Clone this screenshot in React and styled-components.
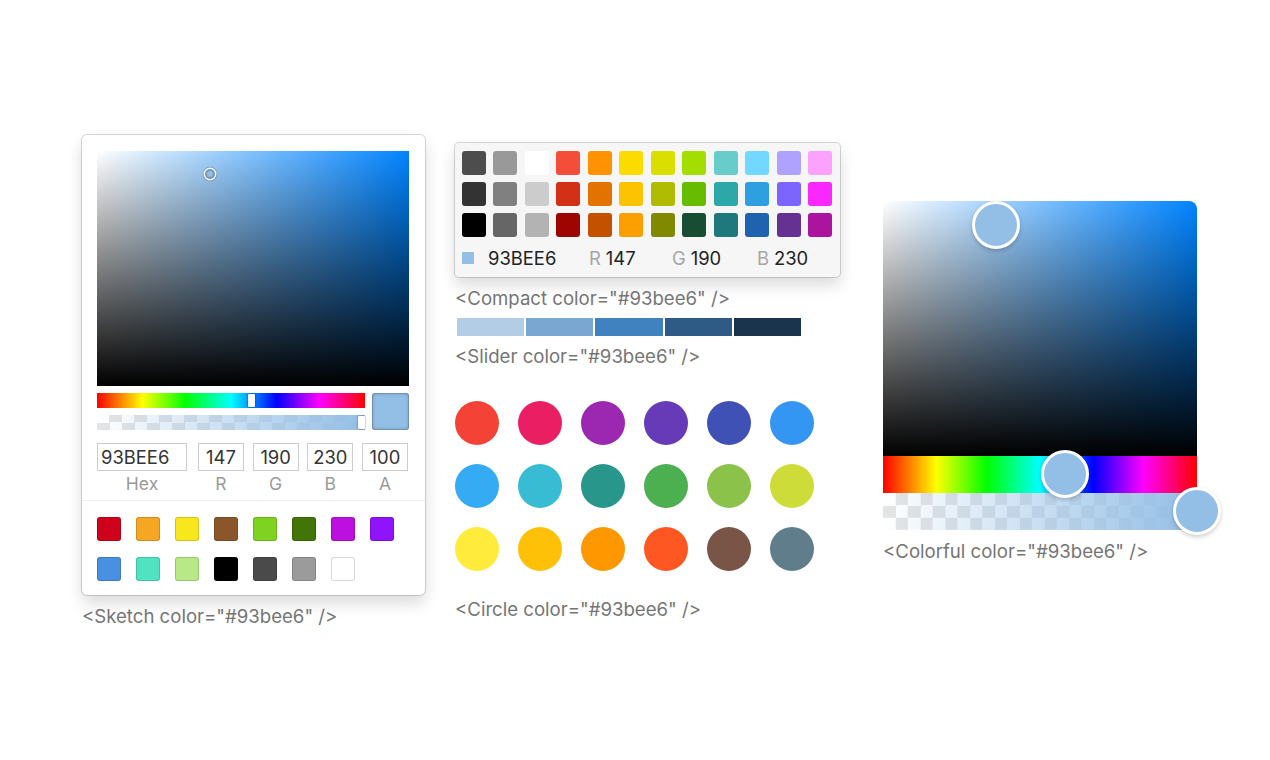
import React from 'react';
import styled, { createGlobalStyle, css } from 'styled-components';

const GlobalStyle = createGlobalStyle`
  * { box-sizing: border-box; }
  body {
    margin: 0;
    background: #fff;
    font-family: Inter, "Noto Sans", sans-serif;
  }
`;

const COLOR = 'rgb(147, 190, 230)';
const HUE_BG = '#0084ff';
const HUE_GRADIENT =
  'linear-gradient(to right, #f00 0%, #ff0 17%, #0f0 33%, #0ff 50%, #00f 67%, #f0f 83%, #f00 100%)';

const checker = (w, h) => css`
  background-color: #fff;
  background-image: conic-gradient(#e4e4e4 25%, #fff 0 50%, #e4e4e4 0 75%, #fff 0);
  background-size: ${w * 2}px ${h * 2}px;
`;

const Page = styled.div`
  min-height: 760px;
  display: flex;
  align-items: center;
  padding: 2px 0 0 82px;
  gap: 30px;
`;

const Column = styled.div`
  display: flex;
  flex-direction: column;
  width: ${(p) => p.$width}px;
`;

const Caption = styled.div`
  font-size: 18.6px;
  line-height: 22px;
  color: #757575;
  margin-top: ${(p) => p.$top || 10}px;
  white-space: nowrap;
`;

/* ---------- Sketch ---------- */

const SketchPanel = styled.div`
  width: 343px;
  background: #fff;
  border-radius: 5px;
  box-shadow: rgba(0, 0, 0, 0.15) 0 0 0 1px, rgba(0, 0, 0, 0.15) 0 8px 16px;
`;

const SketchBody = styled.div`
  padding: 16px 16px 0 15px;
`;

const Saturation = styled.div`
  position: relative;
  height: ${(p) => p.$height}px;
  border-radius: ${(p) => p.$radius || '0'};
  background: linear-gradient(to top, #000, rgba(0, 0, 0, 0)),
    linear-gradient(to right, #fff, rgba(255, 255, 255, 0)), ${HUE_BG};
`;

const SmallRing = styled.div`
  position: absolute;
  left: 36.1%;
  top: 9.8%;
  width: 10px;
  height: 10px;
  margin: -5px 0 0 -5px;
  border-radius: 50%;
  box-shadow: #fff 0 0 0 1.5px, rgba(0, 0, 0, 0.2) 0 0 1px 2px inset,
    rgba(0, 0, 0, 0.3) 0 0 1px 2px;
`;

const ControlRow = styled.div`
  display: flex;
  gap: 7px;
  margin-top: 7px;
`;

const Sliders = styled.div`
  flex: 1;
  display: flex;
  flex-direction: column;
  gap: 7px;
`;

const HueBar = styled.div`
  position: relative;
  height: 15px;
  background: ${HUE_GRADIENT};
`;

const AlphaBar = styled.div`
  position: relative;
  height: 15px;
  ${checker(12.5, 7.5)};
  &::after {
    content: '';
    position: absolute;
    inset: 0;
    background: linear-gradient(to right, rgba(147, 190, 230, 0), ${COLOR});
  }
`;

const BarHandle = styled.div`
  position: absolute;
  z-index: 1;
  top: 1px;
  left: ${(p) => p.$pos}%;
  width: 7px;
  height: 13px;
  margin-left: -4px;
  background: #fff;
  border-radius: 1px;
  box-shadow: rgba(0, 0, 0, 0.6) 0 0 2px;
`;

const ActiveColor = styled.div`
  width: 37px;
  height: 37px;
  border-radius: 3px;
  background: ${COLOR};
  box-shadow: rgba(0, 0, 0, 0.15) 0 0 0 1px inset, rgba(0, 0, 0, 0.25) 0 0 4px inset;
`;

const Fields = styled.div`
  display: flex;
  gap: 8.67px;
  margin-top: 13px;
`;

const Field = styled.div`
  display: flex;
  flex-direction: column;
  align-items: center;
  width: ${(p) => p.$width}px;
  margin-right: ${(p) => p.$gapAfter || 0}px;
`;

const FieldInput = styled.div`
  width: 100%;
  height: 28px;
  padding: 0 4px;
  display: flex;
  align-items: center;
  justify-content: ${(p) => (p.$left ? 'flex-start' : 'center')};
  font-size: 18.4px;
  color: #333;
  box-shadow: #ccc 0 0 0 1px inset;
`;

const FieldLabel = styled.div`
  font-size: 17.5px;
  line-height: 26px;
  color: #9a9a9a;
`;

const SketchSwatches = styled.div`
  border-top: 1px solid #eee;
  margin-top: 3px;
  padding: 16px 15px 14px;
  display: grid;
  grid-template-columns: repeat(8, 24px);
  column-gap: 15px;
  row-gap: 16px;
`;

const Swatch = styled.div`
  width: 24px;
  height: 24px;
  border-radius: 3px;
  background: ${(p) => p.$color};
  box-shadow: ${(p) => (p.$inset ? 'rgba(0, 0, 0, 0.15) 0 0 0 1px inset' : 'none')};
`;

const SKETCH_COLORS = [
  '#D0021B', '#F5A623', '#F8E71C', '#8B572A', '#7ED321', '#417505', '#BD10E0', '#9013FE',
  '#4A90E2', '#50E3C2', '#B8E986', '#000000', '#4A4A4A', '#9B9B9B', '#FFFFFF',
];

/* ---------- Compact ---------- */

const CompactPanel = styled.div`
  width: 385px;
  background: #f6f6f6;
  border-radius: 4px;
  padding: 8px 8px 8px 7px;
  box-shadow: rgba(0, 0, 0, 0.15) 0 0 0 1px, rgba(0, 0, 0, 0.15) 0 8px 16px;
`;

const CompactGrid = styled.div`
  display: grid;
  grid-template-columns: repeat(12, 24px);
  justify-content: space-between;
  row-gap: 7px;
`;

const CompactFooter = styled.div`
  display: flex;
  align-items: center;
  height: 22px;
  margin-top: 10px;
  font-size: 18.4px;
  color: #222;
`;

const MiniSwatch = styled.div`
  width: 12px;
  height: 12px;
  background: ${COLOR};
  margin-right: 14px;
`;

const CompactField = styled.div`
  display: flex;
  width: ${(p) => p.$width}px;
`;

const CompactLabel = styled.span`
  color: #a6a6a6;
  margin-right: 5px;
`;

const COMPACT_COLORS = [
  '#4D4D4D', '#999999', '#FFFFFF', '#F44E3B', '#FE9200', '#FCDC00', '#DBDF00', '#A4DD00', '#68CCCA', '#73D8FF', '#AEA1FF', '#FDA1FF',
  '#333333', '#808080', '#CCCCCC', '#D33115', '#E27300', '#FCC400', '#B0BC00', '#68BC00', '#2DA8A8', '#2E9FDF', '#7B64FF', '#FA28FF',
  '#000000', '#666666', '#B3B3B3', '#9F0500', '#C45100', '#FB9E00', '#808900', '#194D33', '#1F797C', '#1F62B0', '#653294', '#AB149E',
];

/* ---------- Slider ---------- */

const SliderRow = styled.div`
  display: flex;
  gap: 2px;
  width: 346px;
  margin-top: 9px;
  padding-left: 2px;
`;

const SliderStep = styled.div`
  flex: 1;
  height: 18px;
  background: ${(p) => p.$color};
`;

const SLIDER_STEPS = [80, 65, 50, 35, 20].map((l) => `hsl(209, 50%, ${l}%)`);

/* ---------- Circle ---------- */

const CircleGrid = styled.div`
  display: grid;
  grid-template-columns: repeat(6, 44px);
  gap: 19px;
  margin-top: 34px;
`;

const Dot = styled.div`
  width: 44px;
  height: 44px;
  border-radius: 50%;
  background: ${(p) => p.$color};
`;

const CIRCLE_COLORS = [
  '#F44336', '#E91E63', '#9C27B0', '#673AB7', '#3F51B5', '#3396F2',
  '#35ABF4', '#37BCD4', '#28968A', '#4CAF50', '#8BC34A', '#CDDC39',
  '#FFEB3B', '#FFC107', '#FF9800', '#FF5722', '#795548', '#607D8B',
];

/* ---------- Colorful ---------- */

const ColorfulBox = styled.div`
  display: flex;
  flex-direction: column;
  width: 314px;
`;

const ColorfulHue = styled.div`
  position: relative;
  height: 37px;
  background: ${HUE_GRADIENT};
`;

const ColorfulAlpha = styled.div`
  position: relative;
  height: 37px;
  border-radius: 0 0 8px 8px;
  ${checker(12.4, 12.4)};
  &::after {
    content: '';
    position: absolute;
    inset: 0;
    border-radius: 0 0 8px 8px;
    background: linear-gradient(to right, rgba(147, 190, 230, 0), ${COLOR});
  }
`;

const BigPointer = styled.div`
  position: absolute;
  z-index: 2;
  left: ${(p) => p.$x}%;
  top: ${(p) => p.$y}%;
  width: 48px;
  height: 48px;
  transform: translate(-50%, -50%);
  border-radius: 50%;
  background: ${COLOR};
  border: 3px solid #fff;
  box-shadow: 0 2px 4px rgba(0, 0, 0, 0.2);
`;

export default function App() {
  return (
    <>
      <GlobalStyle />
      <Page>
        <Column $width={343}>
          <SketchPanel>
            <SketchBody>
              <Saturation $height={235}>
                <SmallRing />
              </Saturation>
              <ControlRow>
                <Sliders>
                  <HueBar>
                    <BarHandle $pos={58} />
                  </HueBar>
                  <AlphaBar>
                    <BarHandle $pos={99} />
                  </AlphaBar>
                </Sliders>
                <ActiveColor />
              </ControlRow>
              <Fields>
                <Field $width={90} $gapAfter={2.33}>
                  <FieldInput $left>93BEE6</FieldInput>
                  <FieldLabel>Hex</FieldLabel>
                </Field>
                {[
                  ['147', 'R'],
                  ['190', 'G'],
                  ['230', 'B'],
                  ['100', 'A'],
                ].map(([value, label]) => (
                  <Field key={label} $width={46}>
                    <FieldInput>{value}</FieldInput>
                    <FieldLabel>{label}</FieldLabel>
                  </Field>
                ))}
              </Fields>
            </SketchBody>
            <SketchSwatches>
              {SKETCH_COLORS.map((c) => (
                <Swatch key={c} $color={c} $inset />
              ))}
            </SketchSwatches>
          </SketchPanel>
          <Caption>&lt;Sketch color="#93bee6" /&gt;</Caption>
        </Column>

        <Column $width={398}>
          <CompactPanel>
            <CompactGrid>
              {COMPACT_COLORS.map((c) => (
                <Swatch key={c} $color={c} />
              ))}
            </CompactGrid>
            <CompactFooter>
              <MiniSwatch />
              <CompactField $width={101}>93BEE6</CompactField>
              <CompactField $width={83}>
                <CompactLabel>R</CompactLabel>147
              </CompactField>
              <CompactField $width={85}>
                <CompactLabel>G</CompactLabel>190
              </CompactField>
              <CompactField $width={60}>
                <CompactLabel>B</CompactLabel>230
              </CompactField>
            </CompactFooter>
          </CompactPanel>
          <Caption>&lt;Compact color="#93bee6" /&gt;</Caption>
          <SliderRow>
            {SLIDER_STEPS.map((c) => (
              <SliderStep key={c} $color={c} />
            ))}
          </SliderRow>
          <Caption $top={9}>&lt;Slider color="#93bee6" /&gt;</Caption>
          <CircleGrid>
            {CIRCLE_COLORS.map((c) => (
              <Dot key={c} $color={c} />
            ))}
          </CircleGrid>
          <Caption $top={27}>&lt;Circle color="#93bee6" /&gt;</Caption>
        </Column>

        <Column $width={342}>
          <ColorfulBox>
            <Saturation $height={255} $radius="8px 8px 0 0">
              <BigPointer $x={36.1} $y={9.8} />
            </Saturation>
            <ColorfulHue>
              <BigPointer $x={58} $y={50} />
            </ColorfulHue>
            <ColorfulAlpha>
              <BigPointer $x={100} $y={50} />
            </ColorfulAlpha>
          </ColorfulBox>
          <Caption>&lt;Colorful color="#93bee6" /&gt;</Caption>
        </Column>
      </Page>
    </>
  );
}
